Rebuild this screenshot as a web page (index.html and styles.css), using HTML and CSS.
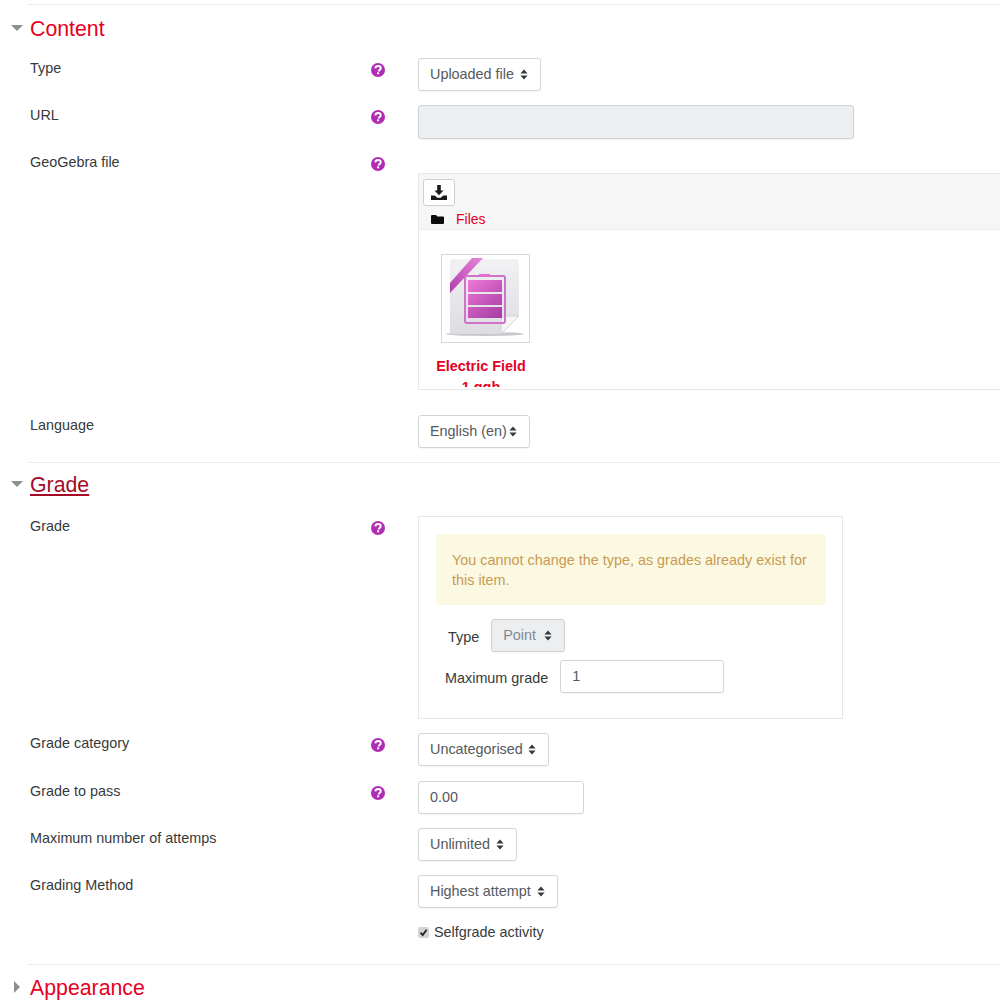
FILE: index.html
```html
<!DOCTYPE html>
<html lang="en">
<head>
<meta charset="utf-8">
<title>GeoGebra settings</title>
<link rel="stylesheet" href="styles.css">
</head>
<body>
<svg class="defs" width="0" height="0" aria-hidden="true">
  <defs>
    <symbol id="help" viewBox="0 0 14 14">
      <circle cx="7" cy="7" r="7" fill="#b02cb4"/>
      <path d="M4.400 5.400C4.500 3.900 5.600 3 7.100 3c1.500 0 2.600.9 2.600 2.200 0 1-.6 1.500-1.200 1.900-.6.400-.8.700-.8 1.300" fill="none" stroke="#fff" stroke-width="2"/>
      <rect x="6.100" y="9.300" width="2" height="2" fill="#fff"/>
    </symbol>
    <symbol id="updown" viewBox="0 0 8 11">
      <path d="M4 0.500 7.600 4.400H.4zM4 10.500.4 6.600h7.200z" fill="#373a3c"/>
    </symbol>
    <linearGradient id="docfill" x1="0" y1="0" x2="0" y2="1">
      <stop offset="0" stop-color="#f2f2f4"/>
      <stop offset="1" stop-color="#dcdce2"/>
    </linearGradient>
    <linearGradient id="barfill" gradientUnits="userSpaceOnUse" x1="26" y1="25" x2="60" y2="63">
      <stop offset="0" stop-color="#ee78d6"/>
      <stop offset="1" stop-color="#a33ba3"/>
    </linearGradient>
    <linearGradient id="ribbonfill" x1="0" y1="1" x2="1" y2="0">
      <stop offset="0" stop-color="#b040ae"/>
      <stop offset="1" stop-color="#e884d8"/>
    </linearGradient>
  </defs>
</svg>

<main class="page">
  <section class="section">
    <div class="section-head">
      <svg class="caret" viewBox="0 0 12 6" width="12" height="6"><path d="M0 0h12L6 6z" fill="#8f8f8f"/></svg>
      <h2 class="section-title">Content</h2>
    </div>

    <div class="row">
      <div class="label">Type</div>
      <svg class="help"><use href="#help"/></svg>
      <div class="control"><div class="select">Uploaded file <svg class="updown"><use href="#updown"/></svg></div></div>
    </div>

    <div class="row row-url">
      <div class="label">URL</div>
      <svg class="help"><use href="#help"/></svg>
      <div class="control"><div class="input input-url is-disabled"></div></div>
    </div>

    <div class="row row-file">
      <div class="label">GeoGebra file</div>
      <svg class="help"><use href="#help"/></svg>
      <div class="control">
        <div class="filemanager">
          <div class="fm-toolbar">
            <div class="fm-button">
              <svg viewBox="0 0 16 15" width="16" height="15"><path d="M6.200 0h3.600v5.600h2.700L8 10.200 3.500 5.600h2.700zM0 10.400h3.600l2.800 2.300h3.200l2.800-2.300H16V15H0z" fill="#1b1b1b"/></svg>
            </div>
            <div class="fm-path">
              <svg viewBox="0 0 13 9" width="13" height="9"><path d="M1 0h4l1.300 1.400H12a1 1 0 0 1 1 1V8a1 1 0 0 1-1 1H1a1 1 0 0 1-1-1V1a1 1 0 0 1 1-1z" fill="#0a0a0a"/></svg>
              <a class="fm-link">Files</a>
            </div>
          </div>
          <div class="fm-body">
            <div class="fm-item">
              <div class="fm-thumb">
                <svg viewBox="0 0 87 87" width="87" height="87">
                  <ellipse cx="43" cy="79" rx="39" ry="2" fill="#9a9a9a" opacity=".55"/>
                  <path d="M11 4h63a3 3 0 0 1 3 3v54L59 79H11a3 3 0 0 1-3-3V7a3 3 0 0 1 3-3z" fill="url(#docfill)"/>
                  <path d="M77 61 59 79V66a5 5 0 0 1 5-5z" fill="#f6f6f7" stroke="#cbcbd1" stroke-width=".8"/>
                  <path d="M8 28 30 3h11L8 38z" fill="url(#ribbonfill)"/>
                  <rect x="23" y="21" width="40" height="47" rx="2" fill="none" stroke="#cf72cb" stroke-width="2"/>
                  <rect x="37" y="19" width="11" height="3" fill="#e06fd0"/>
                  <rect x="26" y="25" width="34" height="12" fill="url(#barfill)"/>
                  <rect x="26" y="39" width="34" height="11" fill="url(#barfill)"/>
                  <rect x="26" y="52" width="34" height="11" fill="url(#barfill)"/>
                </svg>
              </div>
              <div class="fm-name">Electric Field 1.ggb</div>
            </div>
          </div>
        </div>
      </div>
    </div>

    <div class="row">
      <div class="label">Language</div>
      <div class="help-spacer"></div>
      <div class="control"><div class="select">English (en)<svg class="updown"><use href="#updown"/></svg></div></div>
    </div>
  </section>

  <section class="section">
    <div class="section-head section-head-grade">
      <svg class="caret" viewBox="0 0 12 6" width="12" height="6"><path d="M0 0h12L6 6z" fill="#8f8f8f"/></svg>
      <h2 class="section-title is-active">Grade</h2>
    </div>

    <div class="row">
      <div class="label">Grade</div>
      <svg class="help"><use href="#help"/></svg>
      <div class="control">
        <div class="grade-box">
          <div class="alert">You cannot change the type, as grades already exist for this item.</div>
          <div class="inline-field inline-type">
            <span class="inline-label">Type</span>
            <div class="select select-wide is-disabled">Point <svg class="updown"><use href="#updown"/></svg></div>
          </div>
          <div class="inline-field inline-max">
            <span class="inline-label">Maximum grade</span>
            <div class="input input-grade">1</div>
          </div>
        </div>
      </div>
    </div>

    <div class="row row-category">
      <div class="label">Grade category</div>
      <svg class="help"><use href="#help"/></svg>
      <div class="control"><div class="select select-tight">Uncategorised <svg class="updown"><use href="#updown"/></svg></div></div>
    </div>

    <div class="row">
      <div class="label">Grade to pass</div>
      <svg class="help"><use href="#help"/></svg>
      <div class="control"><div class="input input-pass">0.00</div></div>
    </div>

    <div class="row">
      <div class="label">Maximum number of attemps</div>
      <div class="help-spacer"></div>
      <div class="control"><div class="select">Unlimited <svg class="updown"><use href="#updown"/></svg></div></div>
    </div>

    <div class="row">
      <div class="label">Grading Method</div>
      <div class="help-spacer"></div>
      <div class="control"><div class="select">Highest attempt <svg class="updown"><use href="#updown"/></svg></div></div>
    </div>

    <div class="row row-check">
      <div class="label"></div>
      <div class="help-spacer"></div>
      <div class="control check-line">
        <span class="checkbox"><svg viewBox="0 0 11 11" width="11" height="11"><path d="M2.500 5.600 4.700 8 8.600 2.800" fill="none" stroke="#222" stroke-width="1.800"/></svg></span>
        <span>Selfgrade activity</span>
      </div>
    </div>
  </section>

  <section class="section">
    <div class="section-head section-head-last">
      <svg class="caret caret-closed" viewBox="0 0 6 12" width="6" height="12"><path d="M0 0l6 6-6 6z" fill="#8f8f8f"/></svg>
      <h2 class="section-title">Appearance</h2>
    </div>
  </section>
</main>
</body>
</html>
```

FILE: styles.css
```css
* { box-sizing: border-box; }

html, body {
  margin: 0;
  height: 1008px;
  overflow: hidden;
  background: #fff;
}

body {
  font-family: "Liberation Sans", Arial, sans-serif;
  font-size: 14.4px;
  line-height: 21px;
  color: #373a3c;
}

.defs { position: absolute; }

.page { padding-top: 4px; }

.section {
  margin-left: 28px;
  border-top: 1px solid #ebebeb;
}

.section-head {
  display: flex;
  align-items: center;
  height: 32px;
  margin: 8px 0 13px -17px;
}

.section-head-grade { margin: 6px 0 15px -17px; }
.section-head-last { margin-top: 7px; }

.caret {
  flex: none;
  width: 12px;
  margin-right: 7px;
  margin-top: -2px;
}

.caret-closed {
  width: 6px;
  height: 12px;
  margin-left: 3px;
  margin-right: 10px;
  margin-top: -2px;
}

.section-title {
  margin: 0;
  font-size: 21.3px;
  line-height: 32px;
  font-weight: 400;
  color: #e60023;
}

.section-title.is-active {
  color: #a50a26;
  text-decoration: underline;
}

.row {
  display: grid;
  grid-template-columns: 341px 14px minmax(0, 1fr);
  margin: 0 0 14px 2px;
}

.row-url { margin-bottom: 13px; }
.row-file { margin-bottom: 25px; }
.row-category { margin-bottom: 15px; }
.row-check { margin-bottom: 21px; }

.help {
  width: 14px;
  height: 14px;
  margin-top: 5px;
}

.help-spacer { width: 14px; }

.control {
  padding-left: 33px;
  min-width: 0;
}

.select,
.input {
  height: 33px;
  border: 1px solid #d5d5d5;
  border-radius: 3px;
  background: #fff;
  color: #55595c;
  line-height: 31px;
  box-shadow: 0 1px 1px rgba(0, 0, 0, .04);
}

.select {
  display: inline-flex;
  align-items: center;
  gap: 2px;
  padding: 0 12px 0 11px;
  white-space: pre;
  vertical-align: top;
}

.select-wide { gap: 4px; }
.select-tight { gap: 1px; }

.updown {
  width: 8px;
  height: 11px;
  flex: none;
}

.input { padding: 0 11px; }
.input-url { width: 436px; height: 34px; }
.input-pass { width: 166px; }
.input-grade { width: 164px; }

.is-disabled {
  background: #eceeef;
  border-color: #cfd2d4;
  color: #7f8a92;
}

.filemanager {
  height: 217px;
  margin-top: 21px;
  border: 1px solid #e8e8e8;
  border-right: 0;
  overflow: hidden;
}

.fm-toolbar {
  height: 56px;
  padding: 5px 0 0 4px;
  background: #f6f6f6;
  border-bottom: 1px solid #ececec;
}

.fm-button {
  display: flex;
  align-items: center;
  justify-content: center;
  width: 32px;
  height: 27px;
  background: #fff;
  border: 1px solid #d0d0d0;
  border-radius: 3px;
}

.fm-path {
  display: flex;
  align-items: center;
  gap: 12px;
  height: 20px;
  margin: 3px 0 0 8px;
}

.fm-link {
  color: #e60023;
  font-size: 14px;
}

.fm-body {
  height: 157px;
  padding: 24px 0 0 12px;
  overflow: hidden;
}

.fm-item { width: 100px; }

.fm-thumb {
  width: 89px;
  height: 89px;
  margin-left: 10px;
  border: 1px solid #d8d8d8;
}

.fm-thumb svg { display: block; }

.fm-name {
  margin-top: 13px;
  color: #e60023;
  font-weight: 700;
  text-align: center;
}

.grade-box {
  width: 425px;
  height: 203px;
  padding: 17px;
  border: 1px solid #e8e8e8;
}

.alert {
  width: 390px;
  height: 71px;
  padding: 16px;
  line-height: 20px;
  background: #fcf9e3;
  border-radius: 3px;
  color: #c99a52;
}

.inline-field {
  display: flex;
  align-items: center;
  gap: 12px;
}

.inline-type { margin: 14px 0 8px 12px; }
.inline-max { margin-left: 9px; }
.inline-label { padding-top: 3px; }

.check-line {
  display: flex;
  align-items: center;
  gap: 5px;
}

.checkbox {
  display: block;
  width: 11px;
  height: 11px;
  background: #d4d4d4;
  border-radius: 2px;
}

.checkbox svg { display: block; }
```
